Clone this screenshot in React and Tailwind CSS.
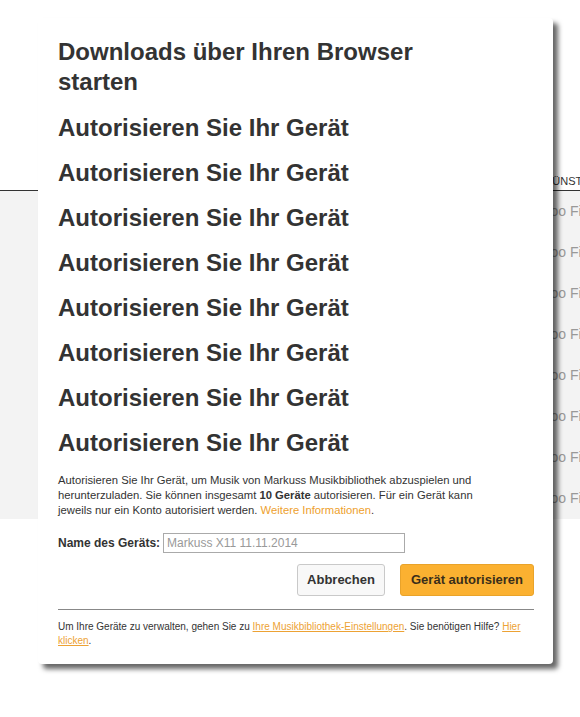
import React from 'react';

// Background table rows that sit behind the dialog
const rows = Array.from({ length: 8 });

const Heading = ({ children, className = '' }) => (
  <h2 className={`text-[24px] leading-[30px] font-bold text-[#333] mb-[15px] ${className}`}>{children}</h2>
);

export default function App() {
  return (
    <div className="relative w-[580px] h-[717px] overflow-hidden bg-white font-['Liberation_Sans',Arial,sans-serif]">
      {/* page behind the modal */}
      <div className="pt-[172px]">
        <div className="h-[19px] border-b border-[#333] pl-[545px] text-[11px] leading-[18px] uppercase text-[#333] whitespace-nowrap">
          Künstler
        </div>
        <div className="bg-[#f3f3f3]">
          {rows.map((_, idx) => (
            <div key={idx} className="h-[41px] flex items-center pl-[542px] text-[14px] text-[#999] whitespace-nowrap">
              Foo Fighters
            </div>
          ))}
        </div>
      </div>

      {/* modal */}
      <div className="absolute left-[38px] top-[18px] w-[515px] bg-white rounded-[4px] shadow-[5px_5px_5px_rgba(0,0,0,0.6)] pl-[20px] pr-[19px] pt-[19px] pb-[16px]">
        <Heading className="w-[420px] mb-[16px]">Downloads über Ihren Browser starten</Heading>
        {rows.map((_, idx) => (
          <Heading key={idx}>Autorisieren Sie Ihr Gerät</Heading>
        ))}

        <p className="w-[448px] text-[11.25px] leading-[15px] text-[#333]">
          Autorisieren Sie Ihr Gerät, um Musik von Markuss Musikbibliothek abzuspielen und herunterzuladen. Sie
          können insgesamt <b>10 Geräte</b> autorisieren. Für ein Gerät kann jeweils nur ein Konto autorisiert
          werden. <span className="text-[#ee9f2d]">Weitere Informationen</span>.
        </p>

        <div className="mt-[15px] flex items-center gap-[3px]">
          <label className="text-[12px] font-bold text-[#333]">Name des Geräts:</label>
          <input
            className="w-[242px] h-[20px] border border-[#aaa] px-[3px] text-[12px] text-[#333] placeholder:text-[#999] outline-none"
            placeholder="Markuss X11 11.11.2014"
          />
        </div>

        <div className="mt-[11px] flex justify-end gap-[15px]">
          <button className="w-[88px] h-[32px] rounded-[3px] border border-[#c9c9c9] bg-[#f8f8f8] text-[13px] font-bold text-[#333]">
            Abbrechen
          </button>
          <button className="w-[134px] h-[32px] rounded-[3px] border border-[#e9a32a] bg-[#fbb131] text-[13px] font-bold text-[#3a2e1a]">
            Gerät autorisieren
          </button>
        </div>

        <div className="mt-[13px] border-t border-[#888]" />

        <p className="mt-[10px] text-[10px] leading-[14px] text-[#333]">
          Um Ihre Geräte zu verwalten, gehen Sie zu{' '}
          <span className="text-[#eda234] underline">Ihre Musikbibliothek-Einstellungen</span>. Sie benötigen Hilfe?{' '}
          <span className="text-[#eda234] underline">Hier klicken</span>.
        </p>
      </div>
    </div>
  );
}
